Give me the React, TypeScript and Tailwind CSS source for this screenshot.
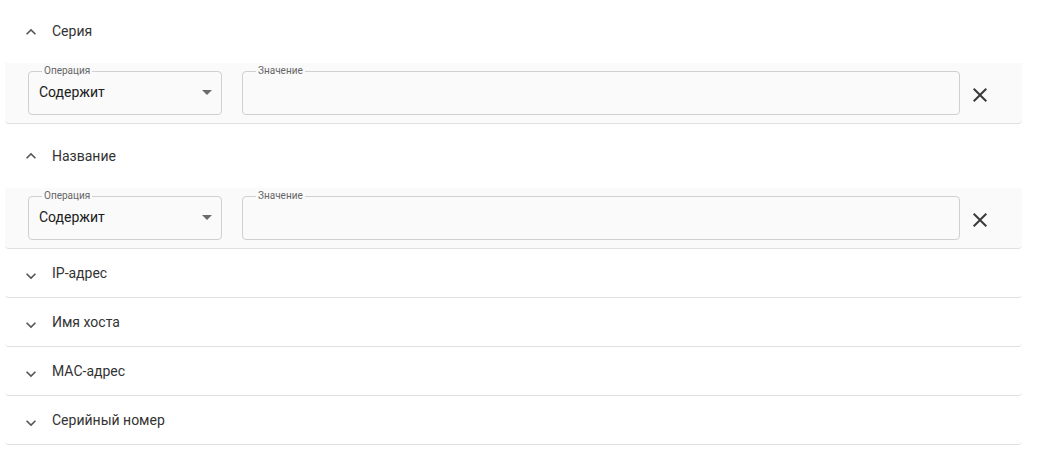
const font = { fontFamily: "Roboto, 'Liberation Sans', sans-serif" };

const ChevronUp = () => (
  <svg width="20" height="20" viewBox="0 0 24 24" className="text-[#555]">
    <path fill="currentColor" d="M12 8l-6 6 1.41 1.41L12 10.83l4.59 4.58L18 14z" />
  </svg>
);

const ChevronDown = () => (
  <svg width="20" height="20" viewBox="0 0 24 24" className="text-[#555]">
    <path fill="currentColor" d="M16.59 8.59L12 13.17 7.41 8.59 6 10l6 6 6-6z" />
  </svg>
);

const CloseIcon = () => (
  <svg width="24" height="24" viewBox="0 0 24 24" className="text-[#3a3a3a]">
    <path
      fill="currentColor"
      d="M19 6.41L17.59 5 12 10.59 6.41 5 5 6.41 10.59 12 5 17.59 6.41 19 12 13.41 17.59 19 19 17.59 13.41 12z"
    />
  </svg>
);

const Outlined = ({
  label,
  className,
  children,
}: {
  label: string;
  className: string;
  children?: React.ReactNode;
}) => (
  <fieldset className={`h-[49px] rounded-[4px] border border-[#d0d0d0] px-[10px] ${className}`}>
    <legend className="ml-[3px] px-[2px] text-[10px] leading-[10px] text-[#666]">{label}</legend>
    {children}
  </fieldset>
);

const FilterBody = () => (
  <div className="flex h-[61px] items-start rounded-b-[4px] border-b border-[#e0e0e0] bg-[#fafafa] pl-[23px] pt-[3px]">
    <Outlined label="Операция" className="w-[194px]">
      <div className="flex items-center justify-between pt-[6px]">
        <span className="text-[14px] leading-[20px] text-[#202020]">Содержит</span>
        <span className="mr-[-1px] mt-[1px] h-0 w-0 border-x-[5px] border-t-[5px] border-x-transparent border-t-[#6b6b6b]" />
      </div>
    </Outlined>
    <Outlined label="Значение" className="ml-[20px] w-[718px]" />
    <button className="ml-[8px] mt-[17px] flex h-[24px] w-[24px] items-center justify-center">
      <CloseIcon />
    </button>
  </div>
);

const Section = ({ title, open, first }: { title: string; open?: boolean; first?: boolean }) => (
  <div>
    {open ? (
      <>
        <div className={`flex items-center pl-[16px] ${first ? "h-[63px]" : "h-[64px]"}`}>
          <ChevronUp />
          <span className="ml-[11px] text-[14px] text-[#333]">{title}</span>
        </div>
        <FilterBody />
      </>
    ) : (
      <div className="flex h-[49px] items-center rounded-b-[4px] border-b border-[#e0e0e0] pl-[16px]">
        <div className="mt-[5px]">
          <ChevronDown />
        </div>
        <span className="ml-[11px] text-[14px] text-[#333]">{title}</span>
      </div>
    )}
  </div>
);

export default function App() {
  return (
    <div className="h-[451px] w-[1040px] bg-white" style={font}>
      <div className="ml-[5px] w-[1017px]">
        <Section title="Серия" open first />
        <Section title="Название" open />
        <Section title="IP-адрес" />
        <Section title="Имя хоста" />
        <Section title="MAC-адрес" />
        <Section title="Серийный номер" />
      </div>
    </div>
  );
}
